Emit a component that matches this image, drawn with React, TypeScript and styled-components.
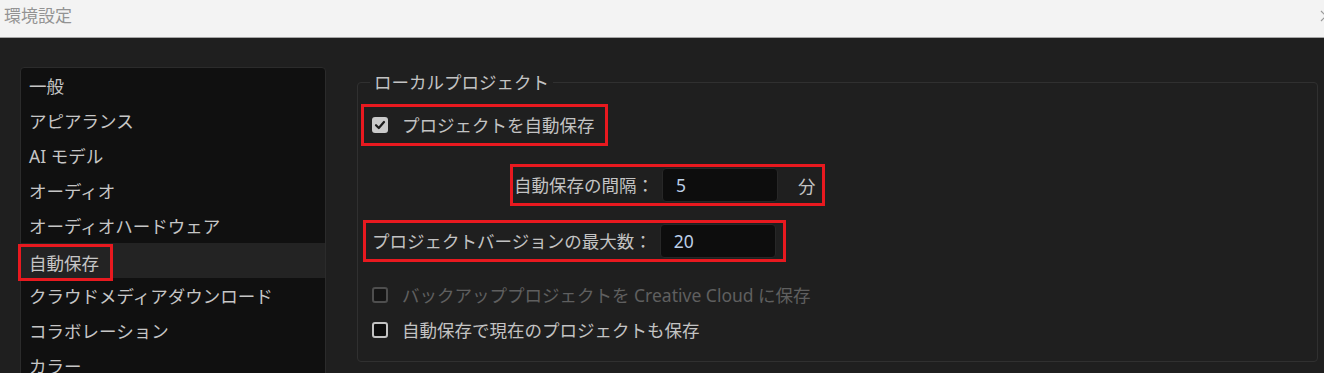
import styled, { createGlobalStyle } from 'styled-components';

const GlobalStyle = createGlobalStyle`
  html, body {
    margin: 0;
    padding: 0;
    background: #1f1f1f;
    overflow: hidden;
  }
  body {
    font-family: "Noto Sans", "Noto Sans CJK JP", sans-serif;
  }
`;

// text kept as escapes so the bundle stays plain ascii
const T = {
  title: '\u74B0\u5883\u8A2D\u5B9A',
  autoSave: '\u81EA\u52D5\u4FDD\u5B58',
  local: '\u30ED\u30FC\u30AB\u30EB\u30D7\u30ED\u30B8\u30A7\u30AF\u30C8',
  saveProject: '\u30D7\u30ED\u30B8\u30A7\u30AF\u30C8\u3092\u81EA\u52D5\u4FDD\u5B58',
  interval: '\u81EA\u52D5\u4FDD\u5B58\u306E\u9593\u9694\uFF1A',
  minutes: '\u5206',
  maxVersions:
    '\u30D7\u30ED\u30B8\u30A7\u30AF\u30C8\u30D0\u30FC\u30B8\u30E7\u30F3\u306E\u6700\u5927\u6570\uFF1A',
  backup:
    '\u30D0\u30C3\u30AF\u30A2\u30C3\u30D7\u30D7\u30ED\u30B8\u30A7\u30AF\u30C8\u3092 Creative Cloud \u306B\u4FDD\u5B58',
  saveCurrent:
    '\u81EA\u52D5\u4FDD\u5B58\u3067\u73FE\u5728\u306E\u30D7\u30ED\u30B8\u30A7\u30AF\u30C8\u3082\u4FDD\u5B58',
};

const categories = [
  '\u4E00\u822C',
  '\u30A2\u30D4\u30A2\u30E9\u30F3\u30B9',
  'AI \u30E2\u30C7\u30EB',
  '\u30AA\u30FC\u30C7\u30A3\u30AA',
  '\u30AA\u30FC\u30C7\u30A3\u30AA\u30CF\u30FC\u30C9\u30A6\u30A7\u30A2',
  T.autoSave,
  '\u30AF\u30E9\u30A6\u30C9\u30E1\u30C7\u30A3\u30A2\u30C0\u30A6\u30F3\u30ED\u30FC\u30C9',
  '\u30B3\u30E9\u30DC\u30EC\u30FC\u30B7\u30E7\u30F3',
  '\u30AB\u30E9\u30FC',
];

type BoxState = 'checked' | 'unchecked' | 'disabled';

const CheckIcon = () => (
  <svg width="16" height="16" viewBox="0 0 16 16">
    <path
      d="M4 8.2 L6.8 11 L12 5"
      fill="none"
      stroke="#1b1b1b"
      strokeWidth="2.2"
      strokeLinecap="round"
      strokeLinejoin="round"
    />
  </svg>
);

export default function App() {
  return (
    <>
      <GlobalStyle />
      <Window>
        <TitleBar>
          <Title>{T.title}</Title>
          <CloseButton>
            <svg width="12" height="12" viewBox="0 0 12 12">
              <path d="M1 1 L11 11 M11 1 L1 11" stroke="#9a9a9a" strokeWidth="1.2" />
            </svg>
          </CloseButton>
        </TitleBar>

        <Body>
          <CategoryList>
            {categories.map((name) => (
              <CategoryItem key={name} $active={name === T.autoSave}>
                {name === T.autoSave ? <SelectMark>{name}</SelectMark> : name}
              </CategoryItem>
            ))}
          </CategoryList>

          <Group>
            <Legend>{T.local}</Legend>
            <Stack>
              <Highlight $on $pad="0 10px 0 8px">
                <CheckBox $state="checked">
                  <CheckIcon />
                </CheckBox>
                <OptionText>{T.saveProject}</OptionText>
              </Highlight>

              <Highlight $on $indent={149} $pad="0 6px 0 1px" $gap={18}>
                <FieldLabel>{T.interval}</FieldLabel>
                <NumberInput readOnly defaultValue="5" />
                <Unit>{T.minutes}</Unit>
              </Highlight>

              <Highlight $on $indent={2} $pad="0 7px 0 6px" $gap={14}>
                <FieldLabel>{T.maxVersions}</FieldLabel>
                <NumberInput readOnly defaultValue="20" />
              </Highlight>

              <CheckRow $gap={16}>
                <CheckBox $state="disabled" />
                <OptionText $muted>{T.backup}</OptionText>
              </CheckRow>

              <CheckRow $gap={1}>
                <CheckBox $state="unchecked" />
                <OptionText>{T.saveCurrent}</OptionText>
              </CheckRow>
            </Stack>
          </Group>
        </Body>
      </Window>
    </>
  );
}

const Window = styled.div`
  width: 1324px;
  height: 373px;
  display: flex;
  flex-direction: column;
  overflow: hidden;
  background: #1f1f1f;
`;

const TitleBar = styled.div`
  flex: none;
  height: 38px;
  display: flex;
  align-items: center;
  justify-content: space-between;
  padding: 0 0 6px 4px;
  box-sizing: border-box;
  background: #f3f3f3;
  border-bottom: 1px solid #a6a6a6;
`;

const Title = styled.span`
  font-size: 17px;
  line-height: 20px;
  color: #939393;
`;

const CloseButton = styled.span`
  display: flex;
  margin-right: -8px;
`;

const Body = styled.div`
  flex: 1;
  min-height: 0;
  display: flex;
  align-items: flex-start;
  gap: 31px;
  padding: 29px 6px 0 20px;
`;

const CategoryList = styled.ul`
  list-style: none;
  margin: 0;
  padding: 0;
  width: 306px;
  flex: none;
  box-sizing: border-box;
  background: #101010;
  border: 1px solid #2b2b2b;
  border-radius: 4px;
`;

const CategoryItem = styled.li<{ $active?: boolean }>`
  height: 35px;
  display: flex;
  align-items: center;
  padding-left: 8px;
  font-size: 17.5px;
  color: #c6c6c6;
  background: ${(p) => (p.$active ? '#232323' : 'transparent')};
  white-space: nowrap;
`;

const SelectMark = styled.span`
  display: inline-flex;
  align-items: center;
  height: 37px;
  box-sizing: border-box;
  margin: 3px 0 0 -11px;
  padding: 0 11px 0 8px;
  border: 3px solid #e8191f;
`;

const Group = styled.fieldset`
  flex: 1;
  min-width: 0;
  margin: 3px 0 0;
  padding: 10px 0 14px 3px;
  border: 1px solid #303030;
  border-radius: 4px;
`;

const Legend = styled.legend`
  margin-left: 9px;
  padding: 0 4px;
  font-size: 17.5px;
  line-height: 24px;
  color: #c3c3c3;
`;

const Stack = styled.div`
  display: flex;
  flex-direction: column;
  align-items: flex-start;
`;

const Highlight = styled.div<{ $on?: boolean; $indent?: number; $pad: string; $gap?: number }>`
  display: flex;
  align-items: center;
  height: 42px;
  box-sizing: border-box;
  margin: ${(p) => p.$gap ?? 0}px 0 0 ${(p) => p.$indent ?? 0}px;
  padding: ${(p) => p.$pad};
  border: 3px solid ${(p) => (p.$on ? '#e8191f' : 'transparent')};
`;

const CheckRow = styled.div<{ $gap?: number }>`
  display: flex;
  align-items: center;
  height: 34px;
  margin-top: ${(p) => p.$gap ?? 0}px;
  padding-left: 11px;
`;

const CheckBox = styled.span<{ $state: BoxState }>`
  flex: none;
  width: 16px;
  height: 16px;
  display: flex;
  box-sizing: border-box;
  border-radius: 3px;
  margin-right: 14px;
  background: ${(p) =>
    p.$state === 'checked' ? '#c9c9c9' : p.$state === 'disabled' ? '#151515' : '#0d0d0d'};
  border: ${(p) =>
    p.$state === 'checked'
      ? 'none'
      : p.$state === 'disabled'
        ? '2px solid #4e4e4e'
        : '2px solid #c2c2c2'};
`;

const OptionText = styled.span<{ $muted?: boolean }>`
  font-size: 17.5px;
  line-height: 24px;
  white-space: nowrap;
  color: ${(p) => (p.$muted ? '#5f5f5f' : '#c3c3c3')};
`;

const FieldLabel = styled.span`
  font-size: 17.5px;
  line-height: 24px;
  white-space: nowrap;
  color: #c3c3c3;
  margin-right: 8px;
`;

const NumberInput = styled.input`
  width: 116px;
  height: 34px;
  box-sizing: border-box;
  padding: 0 0 0 13px;
  font: inherit;
  font-size: 17.5px;
  color: #bccfe8;
  background: #0d0d0d;
  border: 1px solid #272727;
  border-radius: 4px;
  outline: none;
`;

const Unit = styled.span`
  margin-left: 20px;
  font-size: 17.5px;
  color: #c3c3c3;
`;
